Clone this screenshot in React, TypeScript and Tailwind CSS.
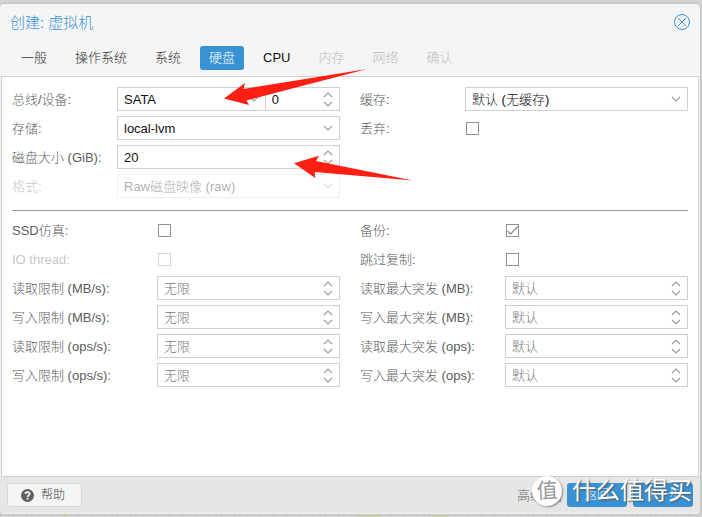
import React from "react";

const spinBtn = "flex h-[9px] w-5 items-center justify-center text-[#999]";

function Chevron({ up = false }: { up?: boolean }) {
  return (
    <svg width="10" height="6" viewBox="0 0 10 6" fill="none" stroke="currentColor" strokeWidth="1.1">
      <path d={up ? "M1 5 5 1 9 5" : "M1 1 5 5 9 1"} />
    </svg>
  );
}

type RowProps = { id: string; label: string; wide?: boolean; disabled?: boolean; children: React.ReactNode };

function Row({ id, label, wide, disabled, children }: RowProps) {
  return (
    <div className={`flex h-6 items-center ${disabled ? "opacity-35" : ""}`}>
      <label htmlFor={id} className={`shrink-0 pt-0.5 whitespace-nowrap text-[#5c5c5c] ${wide ? "w-[145px]" : "w-[105px]"}`}>
        {label}
      </label>
      {children}
    </div>
  );
}

function Combo({ id, value, className = "w-full" }: { id: string; value: string; className?: string }) {
  return (
    <div className={`flex h-6 min-w-0 items-center border border-[#cfcfcf] bg-white ${className}`}>
      <select id={id} className="h-full w-full appearance-none bg-transparent pt-px pr-5 pl-1.5 text-[#111] outline-none">
        <option>{value}</option>
      </select>
      <span className="pointer-events-none -ml-4 shrink-0 pr-1.5 text-[#999]">
        <Chevron />
      </span>
    </div>
  );
}

type SpinProps = { id: string; value?: string; placeholder?: string; label?: string; className?: string };

function Spin({ id, value, placeholder, label, className = "w-full" }: SpinProps) {
  return (
    <div className={`flex h-6 min-w-0 border border-[#cfcfcf] bg-white ${className}`}>
      <input
        id={id}
        type="text"
        inputMode="numeric"
        defaultValue={value}
        placeholder={placeholder}
        aria-label={label}
        className="h-full w-full min-w-0 bg-transparent pl-1.5 text-[#111] outline-none placeholder:text-[#777]"
      />
      <span className="flex w-[21px] shrink-0 flex-col justify-center">
        <button type="button" aria-label="+" className={spinBtn}><Chevron up /></button>
        <button type="button" aria-label="-" className={spinBtn}><Chevron /></button>
      </span>
    </div>
  );
}

function Check({ id, checked }: { id: string; checked?: boolean }) {
  return (
    <span className="ml-px grid shrink-0">
      <input
        id={id}
        type="checkbox"
        defaultChecked={checked}
        className="peer col-start-1 row-start-1 size-[13px] appearance-none border border-[#919191] bg-white"
      />
      <svg className="pointer-events-none col-start-1 row-start-1 hidden size-[13px] peer-checked:block" viewBox="0 0 13 13" fill="none" stroke="#919191" strokeWidth="1.3">
        <path d="M1.5 7 4.5 10 12 2.5" />
      </svg>
    </span>
  );
}

const tabs = [
  { name: "一般" },
  { name: "操作系统" },
  { name: "系统" },
  { name: "硬盘", active: true },
  { name: "CPU", plain: true },
  { name: "内存", disabled: true },
  { name: "网络", disabled: true },
  { name: "确认", disabled: true },
];

function tabClass(tab: { active?: boolean; plain?: boolean; disabled?: boolean }) {
  if (tab.active) return "bg-[#3892d4] text-white";
  if (tab.disabled) return "text-[#bdbdbd]";
  return tab.plain ? "text-[#111]" : "text-[#333]";
}

const limits = [
  ["读取限制 (MB/s):", "读取最大突发 (MB):"],
  ["写入限制 (MB/s):", "写入最大突发 (MB):"],
  ["读取限制 (ops/s):", "读取最大突发 (ops):"],
  ["写入限制 (ops/s):", "写入最大突发 (ops):"],
];

const column = "flex min-w-0 flex-col gap-[5px]";
const primary = "flex h-6 w-15 items-center justify-center rounded-[3px] bg-[#3892d4] text-xs text-white";

export default function App() {
  return (
    <div className="relative flex min-h-screen flex-col bg-[#d4d4d4] pt-1 font-['Liberation_Sans','Noto_Sans_CJK_SC',sans-serif] text-[13px] leading-5 font-light">
      <section role="dialog" aria-labelledby="title" className="mr-0.5 flex flex-1 flex-col rounded-[4px] border-b border-[#f3f3f3] bg-[#f5f5f5] shadow-[0_0_3px_#aaa]">
        <header className="flex h-9 items-center justify-between pr-[9px] pl-2.5">
          <h1 id="title" className="pt-0.5 text-[15px] text-[#3892d4]">创建: 虚拟机</h1>
          <button type="button" aria-label="关闭" className="text-[#3892d4]">
            <svg width="18" height="18" viewBox="0 0 18 18" fill="none" stroke="currentColor">
              <circle cx="9" cy="9" r="7.5" />
              <path d="m5 5 8 8M13 5l-8 8" />
            </svg>
          </button>
        </header>

        <div role="tablist" className="flex h-9 items-start gap-2.5 px-3 pt-1.5">
          {tabs.map((tab) => (
            <button
              key={tab.name}
              type="button"
              role="tab"
              aria-selected={!!tab.active}
              disabled={tab.disabled}
              className={`h-6 rounded-[3px] px-[9px] ${tabClass(tab)}`}
            >
              {tab.name}
            </button>
          ))}
        </div>

        <main className="mx-px flex-1 border border-[#cfcfcf] bg-white p-2.5">
          <div className="grid grid-cols-2 gap-5">
            <div className={column}>
              <Row id="bus" label="总线/设备:">
                <Combo id="bus" value="SATA" className="flex-2" />
                <Spin id="device" value="0" label="设备" className="-ml-px flex-1" />
              </Row>
              <Row id="storage" label="存储:"><Combo id="storage" value="local-lvm" /></Row>
              <Row id="size" label="磁盘大小 (GiB):"><Spin id="size" value="20" /></Row>
              <Row id="format" label="格式:" disabled><Combo id="format" value="Raw磁盘映像 (raw)" /></Row>
            </div>
            <div className={column}>
              <Row id="cache" label="缓存:"><Combo id="cache" value="默认 (无缓存)" /></Row>
              <Row id="discard" label="丢弃:"><Check id="discard" /></Row>
            </div>
          </div>

          <hr className="mt-3 mb-[7px] border-[#999]" />

          <div className="grid grid-cols-2 gap-5">
            <div className={column}>
              <Row id="ssd" label="SSD仿真:" wide><Check id="ssd" /></Row>
              <Row id="iothread" label="IO thread:" wide disabled><Check id="iothread" /></Row>
              {limits.map(([label], i) => (
                <Row key={label} id={`limit${i}`} label={label} wide>
                  <Spin id={`limit${i}`} placeholder="无限" />
                </Row>
              ))}
            </div>
            <div className={column}>
              <Row id="backup" label="备份:" wide><Check id="backup" checked /></Row>
              <Row id="skip" label="跳过复制:" wide><Check id="skip" /></Row>
              {limits.map(([, label], i) => (
                <Row key={label} id={`burst${i}`} label={label} wide>
                  <Spin id={`burst${i}`} placeholder="默认" />
                </Row>
              ))}
            </div>
          </div>
        </main>

        <footer className="flex h-9 items-center rounded-b-[4px] bg-[#e6e6e6] px-[7px]">
          <button type="button" className="flex h-6 w-[75px] items-center gap-[7px] rounded-[3px] border border-[#d8d8d8] bg-[#f5f5f5] pl-[13px] text-xs text-[#444]">
            <svg width="13" height="13" viewBox="0 0 12 12">
              <circle cx="6" cy="6" r="6" fill="#606060" />
              <path d="M4 4.6C4.1 2.2 8 2.3 8 4.5 8 5.8 6.1 5.8 6.1 7.3" fill="none" stroke="#f5f5f5" strokeWidth="1.6" />
              <path d="M5.2 8.2h1.7v1.6H5.2z" fill="#f5f5f5" />
            </svg>
            帮助
          </button>
          <div className="ml-auto flex items-center gap-1.5">
            <div className="flex items-center gap-1">
              <label htmlFor="advanced" className="pt-0.5 text-[#666]">高级</label>
              <Check id="advanced" />
            </div>
            <button type="button" className={primary}>返回</button>
            <button type="button" className={primary}>下一步</button>
          </div>
        </footer>
      </section>

      <div aria-hidden="true" className="flex h-[3px] bg-[linear-gradient(to_right,#c6c6c6_1px,transparent_1px)] bg-[length:13px_100%]">
        <span className="ml-[62px] w-[5px] bg-[#c9cbb0]" />
        <span className="ml-[289px] w-[25px] bg-[#c9cbb0]" />
        <span className="ml-[51px] w-4 bg-[#c9cbb0]" />
      </div>

      <svg className="pointer-events-none absolute top-0 left-0" width="420" height="190" viewBox="0 0 420 190" fill="#ff1f12">
        <path d="M224 98.5 245 83l-1.5 6L367 69 246.5 100.5 249 105Z" />
        <path d="m294 163.3 25-7.6-3 5.2 97 19.6-98.3-8.6.6 6.1Z" />
      </svg>

      <div className="pointer-events-none absolute right-2.5 bottom-2.5 flex items-center gap-2.5">
        <span className="flex size-[30px] -rotate-3 items-center justify-center rounded-full bg-white text-[21px] font-normal text-[#999] shadow-[1px_1px_2px_#888]">值</span>
        <span className="text-[24px] leading-8 font-normal text-white [text-shadow:1px_1px_2px_#555]">什么值得买</span>
      </div>
    </div>
  );
}
